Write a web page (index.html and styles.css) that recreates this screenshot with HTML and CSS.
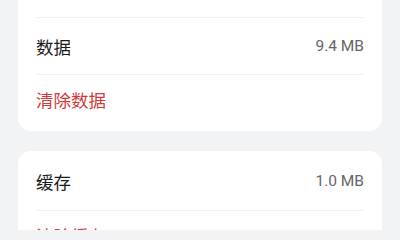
FILE: index.html
```html
<!DOCTYPE html>
<html lang="zh-CN">
<head>
<meta charset="utf-8">
<link rel="stylesheet" href="styles.css">
</head>
<body>
<div class="page">
  <section class="card card-top">
    <div class="row row-hidden"></div>
    <div class="row"><span class="label">数据</span><span class="value">9.4 MB</span></div>
    <div class="row row-action"><span class="label danger">清除数据</span></div>
  </section>
  <section class="card card-second">
    <div class="row"><span class="label">缓存</span><span class="value">1.0 MB</span></div>
    <div class="row row-action"><span class="label danger">清除缓存</span></div>
  </section>
</div>
</body>
</html>
```
FILE: styles.css
```css
html {
  height: 230px;
  overflow: hidden;
  background: #f2f3f5;
}
html, body {
  margin: 0;
  padding: 0;
}
body {
  height: 230px;
  overflow: hidden;
  font-family: Roboto, "Noto Sans CJK SC", sans-serif;
  -webkit-font-smoothing: antialiased;
}
.page {
  display: flex;
  flex-direction: column;
  gap: 20.6px;
  padding: 0 18px;
  margin-top: -40.8px;
}
.card {
  background: #ffffff;
  border-radius: 13px;
  padding: 0 18px;
  display: flex;
  flex-direction: column;
}
.card-top {
  padding-bottom: 8.4px;
}
.card-second {
  padding-top: 1px;
}
.row {
  height: 57.5px;
  display: flex;
  align-items: center;
  justify-content: space-between;
  border-top: 1px solid #eeeff1;
  box-sizing: border-box;
}
.card .row:first-child {
  border-top: none;
}
.row-action {
  height: 48px;
}
.label {
  font-size: 17.5px;
  color: #1a1a1a;
  padding-top: 2px;
}
.label.danger {
  color: #cf3a3a;
}
.value {
  font-size: 15.5px;
  color: #666666;
}
```
